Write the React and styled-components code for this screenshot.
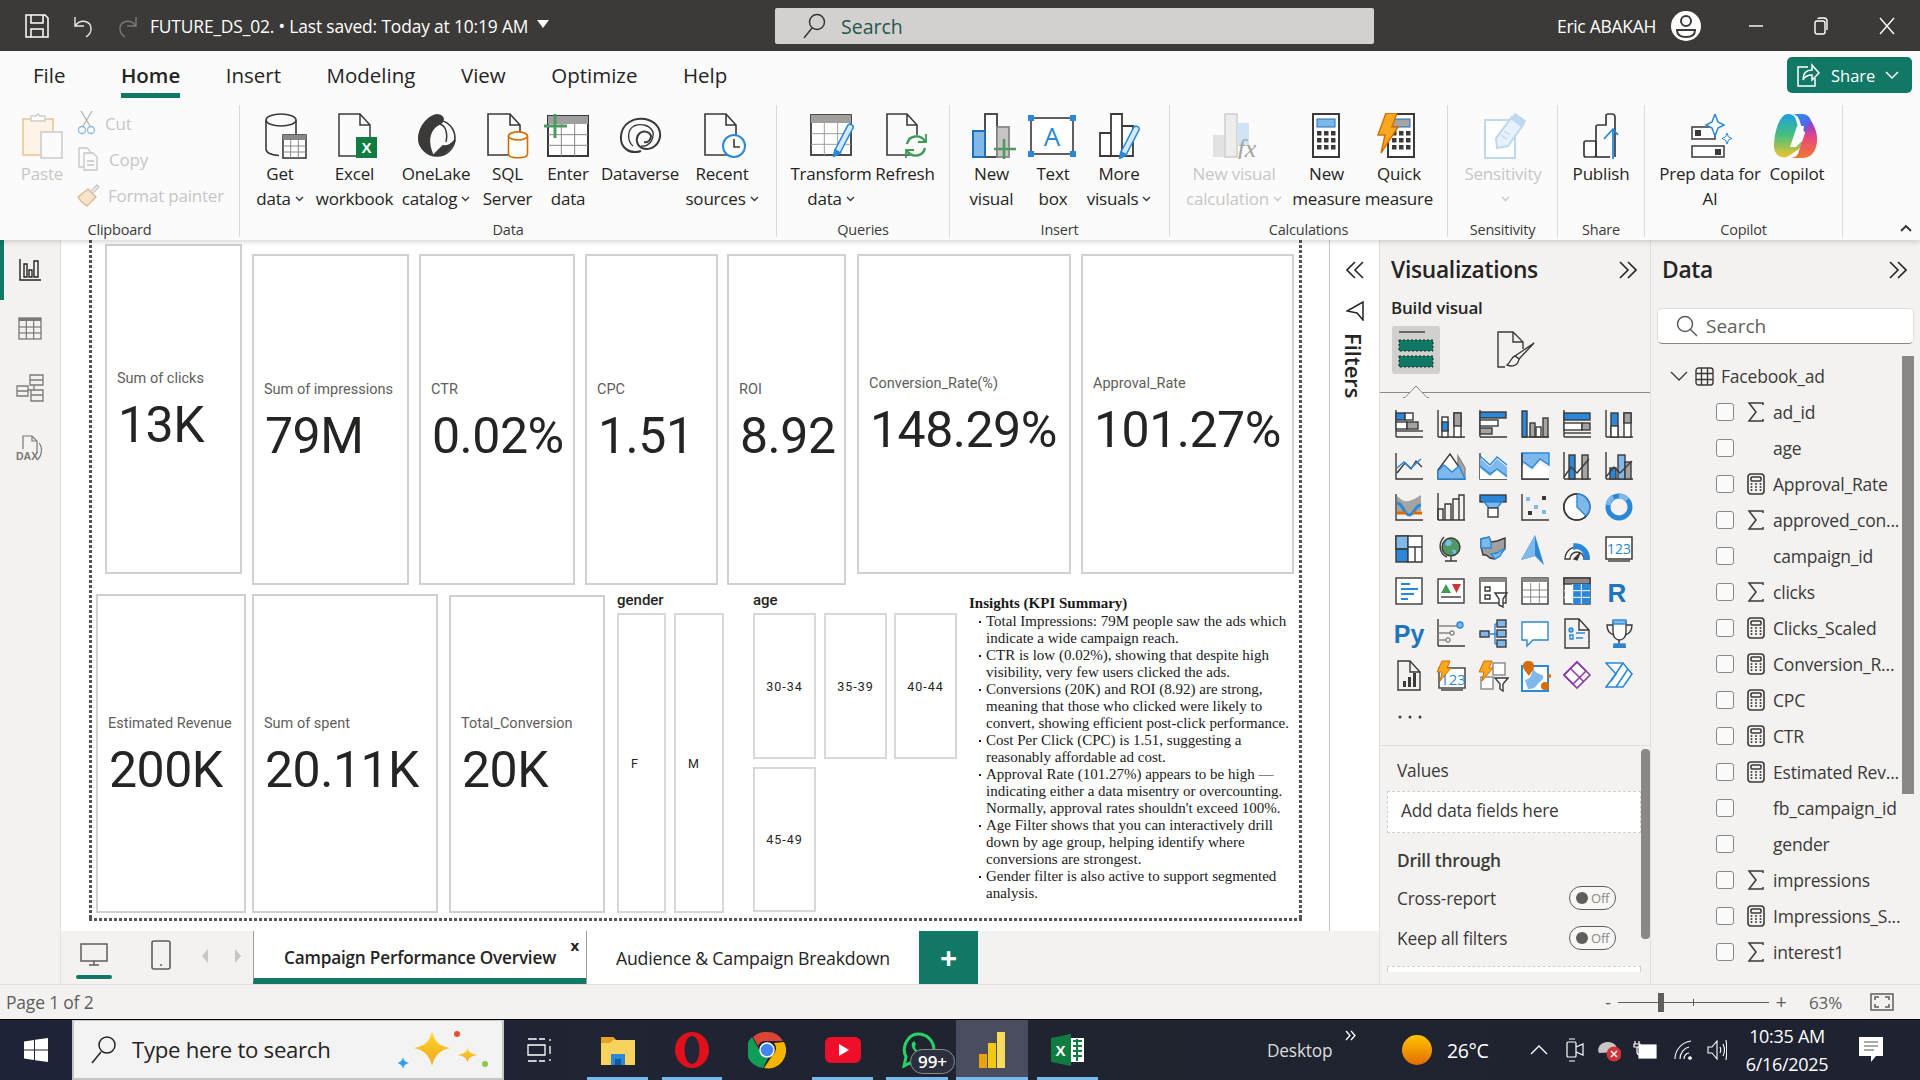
import React from "react"
import styled, { createGlobalStyle } from "styled-components"

const D = "#3b3a39"
const G = "#a6a4a2"
const B = "#2b88d8"
const L = "#7fb9ec"
const GREEN = "#117865"
const UI = `"Open Sans", "Noto Sans", sans-serif`

const Svg = ({ w, h, sw = 1.5, stroke = D, children }) => (
  <svg width={w} height={h} viewBox={`0 0 ${w} ${h}`} fill="none" stroke={stroke} strokeWidth={sw}>
    {children}
  </svg>
)

const Chev = ({ c = "#3b3a39" }) => (
  <svg width="9" height="6" viewBox="0 0 9 6" fill="none" stroke={c} strokeWidth="1.4" style={{ marginLeft: 4 }}>
    <path d="M1 1l3.5 3.5L8 1" />
  </svg>
)

const Doc = ({ x = 1, y = 1, w = 28, h = 42, c = D }) => (
  <path d={`M${x} ${y}H${x + w - 10}L${x + w} ${y + 11}V${y + h}H${x}ZM${x + w - 10} ${y}V${y + 11}H${x + w}`} stroke={c} />
)

const gridLines = (x, y, w, h, cols, rows, c = D, sw = 1) => {
  const out = []
  for (let i = 1; i < cols; i++) out.push(<path key={"c" + i} d={`M${x + (w / cols) * i} ${y}V${y + h}`} stroke={c} strokeWidth={sw} />)
  for (let i = 1; i < rows; i++) out.push(<path key={"r" + i} d={`M${x} ${y + (h / rows) * i}H${x + w}`} stroke={c} strokeWidth={sw} />)
  return out
}

const Calc = ({ x = 1, y = 1, screen = G }) => (
  <g>
    <rect x={x} y={y} width="26" height="43" fill="#fff" strokeWidth="2" />
    <rect x={x + 4} y={y + 5} width="18" height="8" fill={screen} stroke="#1e6fb8" strokeWidth="1" />
    {[17, 24, 31].map(r => [4, 11, 18].map(c => <rect key={r + "-" + c} x={x + c} y={y + r} width="4.5" height="4.5" fill={D} stroke="none" />))}
  </g>
)

const Pencil = ({ x, y }) => (
  <g transform={`translate(${x} ${y})`}>
    <path d="M3 27L16 2c2-2 6 0 5 3L8 30l-6 3z" fill="#d6e9f8" stroke={B} strokeWidth="1.6" />
    <path d="M2 33l1-6 5 3z" fill={B} stroke={B} />
  </g>
)

const icons = {
  paste: (
    <Svg w={42} h={46} stroke="#f0cfa6">
      <path d="M2 6h30v36H2z" fill="#fdf3e6" strokeWidth="2" />
      <path d="M10 8V3h5l2-2 2 2h5v5z" fill="#fff" stroke="#cfcdcb" />
      <rect x="20" y="19" width="21" height="26" fill="#fbfbfb" stroke="#cfcdcb" strokeWidth="1.6" />
    </Svg>
  ),
  getData: (
    <Svg w={42} h={46} sw={1.6}>
      <ellipse cx="16" cy="7" rx="15" ry="6" />
      <path d="M1 7v29c0 4 7 6 13 6.500M31 7v14" />
      <rect x="18" y="22" width="23" height="23" fill="#fff" />
      <rect x="18" y="22" width="23" height="5" fill="#8a8886" stroke="none" />
      {gridLines(18, 27, 23, 18, 3, 3, "#8a8886")}
    </Svg>
  ),
  excel: (
    <Svg w={42} h={46} sw={1.5} stroke="#8a8886">
      <Doc x={2} y={1} w={31} h={42} />
      <rect x="19" y="24" width="21" height="21" fill="#107c41" stroke="none" />
      <text x="29.500" y="40" fontSize="15" fontWeight="700" fontFamily="Liberation Sans" fill="#fff" stroke="none" textAnchor="middle">X</text>
    </Svg>
  ),
  onelake: (
    <Svg w={42} h={44} sw={2}>
      <circle cx="21" cy="24" r="18" strokeWidth="1.6" />
      <path d="M3 24C4 10 14 2 21 1c7 1 8 6 2 9C14 14 10 26 16 40 8 38 3 32 3 24z" fill={D} />
      <path d="M24 10c6 2 8 10 6 18" strokeWidth="1.4" />
      <path d="M18 41c8 1 15-3 21-15-3 5-8 7-12 6-3 3-6 6-9 9z" fill={D} />
    </Svg>
  ),
  sql: (
    <Svg w={44} h={46} sw={1.6}>
      <Doc x={1} y={1} w={32} h={41} />
      <ellipse cx="31" cy="23" rx="9.500" ry="4" fill="#fff" stroke="#d86c00" />
      <path d="M21.500 23v18c0 5 19 5 19 0V23" fill="#fff" stroke="#d86c00" />
      <ellipse cx="31" cy="23" rx="9.500" ry="4" fill="#fff" stroke="#d86c00" />
    </Svg>
  ),
  enter: (
    <Svg w={46} h={44}>
      <rect x="4" y="2" width="40" height="40" fill="#fff" strokeWidth="2" />
      <rect x="4" y="2" width="40" height="8" fill="#a19f9d" stroke="none" />
      {gridLines(4, 10, 40, 32, 3, 3, "#8a8886")}
      <path d="M11 0v24M0 12h23" stroke="#4e9a62" strokeWidth="3" />
    </Svg>
  ),
  dataverse: (
    <Svg w={44} h={38} sw={2}>
      <path d="M22 34C10 38 1 30 2 19 3 7 14 0 26 2c10 2 16 9 15 18-2 10-11 14-18 11-6-3-7-11-2-15 4-3 10-1 11 3 0 4-3 7-7 6" />
      <path d="M14 29C8 24 8 13 15 9c7-3 16-1 19 6 1 9-5 15-12 14" strokeWidth="1.4" />
    </Svg>
  ),
  recent: (
    <Svg w={42} h={46} sw={1.6}>
      <Doc x={1} y={1} w={31} h={41} />
      <circle cx="30" cy="33" r="11" fill="#fff" stroke={B} strokeWidth="2" />
      <path d="M30 26v8h6" />
    </Svg>
  ),
  transform: (
    <Svg w={46} h={46} sw={1.8}>
      <rect x="1" y="2" width="40" height="40" fill="#fff" />
      <rect x="1" y="2" width="40" height="8" fill="#a19f9d" stroke="none" />
      {gridLines(1, 10, 40, 32, 3, 3, "#a19f9d")}
      <Pencil x={22} y={10} />
    </Svg>
  ),
  refresh: (
    <Svg w={44} h={46} sw={1.6}>
      <Doc x={1} y={1} w={30} h={41} />
      <circle cx="30" cy="33" r="11" fill="#fbfbfb" stroke="none" />
      <path d="M21 31c2-9 13-10 18-3M39 35c-2 9-13 10-18 3" stroke="#3f9a57" strokeWidth="2.4" />
      <path d="M40 21v8h-8M20 45v-8h8" stroke="#3f9a57" strokeWidth="1.8" />
    </Svg>
  ),
  newVisual: (
    <Svg w={46} h={46} sw={1.8}>
      <rect x="13" y="1" width="12" height="43" fill="#fff" />
      <rect x="25" y="14" width="12" height="30" fill="#c8c6c4" stroke="#8a8886" />
      <rect x="1" y="18" width="12" height="26" fill="#7fb9ec" stroke="#1e6fb8" strokeWidth="2" />
      <path d="M32 26v20M22 36h22" stroke="#4e9a62" strokeWidth="2.6" />
    </Svg>
  ),
  textBox: (
    <Svg w={48} h={46} sw={1.6}>
      <rect x="3" y="5" width="42" height="36" fill="#fff" />
      {[[3, 5], [45, 5], [3, 41], [45, 41]].map(p => (
        <rect key={p.join()} x={p[0] - 3} y={p[1] - 3} width="6" height="6" fill={B} stroke="none" />
      ))}
      <text x="24" y="33" fontSize="26" fontFamily="Open Sans" fill={B} stroke="none" textAnchor="middle">A</text>
    </Svg>
  ),
  more: (
    <Svg w={46} h={46} sw={1.8}>
      <path d="M1 20h11v23H1zM12 1h11v42H12zM23 13h11v30H23z" fill="#fff" />
      <Pencil x={19} y={12} />
    </Svg>
  ),
  calcVisual: (
    <Svg w={46} h={46} sw={1.6} stroke="#d2d0ce">
      <rect x="0" y="22" width="12" height="22" fill="#e4e2e0" stroke="none" />
      <rect x="12" y="1" width="12" height="43" fill="#ededed" />
      <rect x="24" y="10" width="12" height="22" fill="#cfe4f6" stroke="none" />
      <text x="34" y="44" fontSize="26" fontStyle="italic" fontFamily="Liberation Serif" fill="#a6a4a2" stroke="none" textAnchor="middle">fx</text>
    </Svg>
  ),
  measure: (
    <Svg w={30} h={46}><Calc x={2} y={1} screen={L} /></Svg>
  ),
  quick: (
    <Svg w={42} h={46}>
      <g transform="translate(13 1)"><Calc x={0} y={0} screen={G} /></g>
      <path d="M11 0h11l-5 14h6L6 40l4-18H3z" fill="#f6a821" stroke="#d86c00" strokeWidth="1.4" />
    </Svg>
  ),
  sensitivity: (
    <Svg w={44} h={46} stroke="#bcd9f0" sw={2}>
      <rect x="1" y="7" width="30" height="38" fill="#fff" />
      <path d="M12 25L28 4l11 8-15 21-11 2z" fill="#e6f1fa" />
      <path d="M31 1l10 7-3 5-10-7z" fill="#bcd9f0" />
      <path d="M17 22l6 4M20 18l6 4" strokeWidth="1.4" />
    </Svg>
  ),
  publish: (
    <Svg w={36} h={46} sw={1.7}>
      <rect x="1" y="28" width="12" height="16" rx="2" fill="#fff" />
      <path d="M13 44V14c0-2 1-2 2-2h8V3c0-1 1-2 2-2h4c2 0 3 1 3 3v40" />
      <path d="M13 44h14" />
      <path d="M30 46V17M21 26l9-10 5 6" stroke={B} strokeWidth="1.8" />
    </Svg>
  ),
  prep: (
    <Svg w={42} h={44} sw={1.5}>
      <rect x="1" y="13" width="23" height="12" fill="#fff" />
      <rect x="4" y="16" width="6" height="6" fill={D} stroke="none" />
      <rect x="1" y="32" width="32" height="11" fill="#fff" />
      <rect x="24" y="35" width="6" height="6" fill={D} stroke="none" />
      <path d="M24 0l3 8 6 3-6 3-3 8-3-8-6-3 6-3z" stroke={B} fill="#fff" />
      <path d="M36 19l1.500 4 3.500 1.500-3.500 1.500-1.500 4-1.500-4-3.500-1.500 3.500-1.500z" stroke={B} fill="#fff" strokeWidth="1" />
    </Svg>
  ),
  copilot: (
    <svg width="46" height="46" viewBox="0 0 46 46">
      <defs>
        <linearGradient id="cpa" x1="0" y1="0" x2="1" y2="1">
          <stop offset="0" stopColor="#1a9cf0" /><stop offset="1" stopColor="#7c3fe0" />
        </linearGradient>
        <linearGradient id="cpb" x1="0" y1="0" x2="0" y2="1">
          <stop offset="0" stopColor="#7c3fe0" /><stop offset=".45" stopColor="#e8487f" /><stop offset="1" stopColor="#f0782f" />
        </linearGradient>
        <linearGradient id="cpc" x1="0" y1="0" x2="0" y2="1">
          <stop offset="0" stopColor="#1c9fe0" /><stop offset=".5" stopColor="#49c07a" /><stop offset="1" stopColor="#f2c230" />
        </linearGradient>
      </defs>
      <path d="M15 1h14c5 0 8 3 9 7l4 14c-6 0-11-2-13-7l-3-9c-1-3-4-5-8-5z" fill="url(#cpa)" />
      <path d="M15 1c4 0 7 2 8 6l6 20c1 4-1 9-6 11l-9 6c-7 2-13-3-13-11C1 21 6 1 15 1z" fill="url(#cpc)" />
      <path d="M38 8c5 7 8 17 5 26-2 7-7 11-13 11H17c4 0 8-2 9-7l6-18c1-4 4-9 6-12z" fill="url(#cpb)" />
      <path d="M24 13h7l-2 15-6 6h-6z" fill="#fbfbfb" />
    </svg>
  ),
}

const axis = <path d="M1 1v26h27" />
const box = (x, y, w, h, f = "#fff") => <rect x={x} y={y} width={w} height={h} fill={f} />
const hBase = <path d="M1 0v27M1 27h27" />

const VizText = styled.text`
  font-family: "Liberation Sans", sans-serif;
  font-weight: 700;
`

const viz = [
  <>{hBase}{box(1, 3, 9, 7, B)}{box(10, 3, 8, 7)}{box(1, 12, 11, 7)}{box(12, 12, 11, 7, G)}<path d="M1 21h27" /></>,
  <>{hBase}{box(5, 7, 6, 20)}{box(5, 12, 6, 9, B)}{box(17, 3, 7, 24)}{box(17, 3, 7, 13, G)}</>,
  <>{hBase}{box(1, 2, 26, 6, B)}{box(1, 10, 18, 6)}{box(1, 18, 12, 6, G)}</>,
  <>{box(1, 1, 5, 26, B)}{box(9, 13, 5, 14, G)}{box(15, 17, 5, 10)}{box(22, 8, 5, 19, G)}<path d="M1 27h27" /></>,
  <>{hBase}{box(1, 3, 26, 7, B)}{box(1, 13, 18, 7)}{box(19, 13, 8, 7, G)}<path d="M1 23h27" /></>,
  <>{hBase}{box(6, 3, 7, 24, B)}{box(6, 16, 7, 11)}{box(19, 3, 7, 24)}{box(19, 3, 7, 10, G)}</>,

  <>{axis}<path d="M2 21l8-10 6 6 5-8 6 6" stroke={D} /><path d="M2 16l7-6 7 6 10-9" stroke={B} /></>,
  <>{box(1, 27, 27, 0)}<path d="M21 27V4l7 12v11z" fill={G} stroke="#8a8886" /><path d="M1 27V18L13 2l9 13 5 12z" fill="#fff" /><path d="M1 27v-8l6-6 8 7 7-6 6 13z" fill={L} stroke={B} /></>,
  <>{axis}<path d="M1 6l10 9 7-8 10 8v12H1z" fill={L} stroke="none" /><path d="M1 4l10 9 7-8 10 8M1 14l10 8 7-5 10 7" stroke={B} /><path d="M1 16l10 8 7-6 10 8v1H1z" fill="#fff" stroke="none" /></>,
  <>{axis}<path d="M1 1h27v12l-9-6-8 9-10-7z" fill={L} stroke={B} /><path d="M1 13l10 7 8-9 9 6v10H1z" fill="#fff" stroke="none" />{axis}</>,
  <>{hBase}{box(6, 3, 6, 24, B)}{box(19, 3, 6, 24, G)}<path d="M1 25l7-10 6 6 12-14" /></>,
  <>{hBase}{box(5, 16, 6, 11, B)}{box(13, 3, 7, 24, L)}{box(20, 10, 6, 17, G)}<path d="M1 25l8-10 6 6 12-12" /></>,

  <>{axis}<path d="M2 3c6 5 8 6 12 5s7-3 12-6v16c-6 0-9 3-12 3S7 19 2 19z" fill={G} stroke="none" /><path d="M2 10c6 0 7 12 12 12s6-10 12-10" stroke={B} strokeWidth="3" /><path d="M2 20h9M18 20h9" stroke="#d86c00" strokeWidth="3" /></>,
  <>{hBase}<path d="M1 27V16h5v11M8 27V11h6v16M16 27V6h6v21M22 27V2h5v25" /></>,
  <>{box(1, 2, 26, 7, B)}<path d="M5 9h18l-5 6H10z" fill={L} stroke={B} />{box(9, 15, 10, 9, "#fff")}</>,
  <>{axis}<rect x="5" y="4" width="4" height="4" fill={L} stroke="none" /><rect x="13" y="12" width="4" height="4" fill={L} stroke="none" /><rect x="21" y="3" width="4" height="4" fill={D} stroke="none" /><rect x="7" y="18" width="4" height="4" fill={D} stroke="none" /><rect x="21" y="17" width="4" height="4" fill={L} stroke="none" /></>,
  <><circle cx="14" cy="14" r="13" fill="#fff" /><path d="M14 1a13 13 0 0 1 9 22l-9-9z" fill={L} stroke={B} /><path d="M14 1a13 13 0 1 0 9 22" /></>,
  <><circle cx="14" cy="14" r="11" stroke={B} strokeWidth="5" /><path d="M14 3a11 11 0 0 1 8 4" stroke={L} strokeWidth="5" /><path d="M3 12a11 11 0 0 1 5-8" stroke={L} strokeWidth="5" /></>,

  <>{box(1, 1, 12, 26, B)}{box(1, 1, 12, 13, L)}<path d="M13 1h14v26H13z" fill="#fff" /><path d="M13 12h14M20 12v15" /><path d="M1 14h12" /></>,
  <><circle cx="14" cy="12" r="9" fill="#4e9a62" stroke={D} /><path d="M10 5c4 0 6 2 4 5-3 2-5 1-6-1zM15 15c3-1 5 0 4 3-2 2-3 1-4-3z" fill={L} stroke="none" /><path d="M7 2C1 8 2 19 10 22M8 26h12M14 22v4" /></>,
  <><path d="M2 4l8-2 2 5 6-1 8-3v11l-5 5-4-1-2 6-4-1-4-3H4L2 12z" fill="#a19f9d" stroke={D} /><path d="M2 4l8-2 2 5v6H2z" fill={L} stroke={B} /><path d="M12 19l6-1 8-5-5 8-5 3z" fill={L} stroke={B} /></>,
  <><path d="M14 0l9 30-9-9-14 4z" fill={B} stroke="none" /><path d="M14 0v21L0 25z" fill={L} stroke="none" /></>,
  <><path d="M2 24a12 12 0 0 1 24 0h-5a7 7 0 0 0-14 0z" fill="#fff" /><path d="M11 9a14 14 0 0 1 15 15h-5a8 8 0 0 0-10-10z" fill={B} stroke={B} /><path d="M11 24l6-6-3 7z" fill={D} /></>,
  <><rect x="1" y="2" width="26" height="22" fill="#fff" strokeWidth="1.500" /><path d="M3 26h22" /><text x="14" y="19" fontSize="14" fontFamily="Open Sans" fill={B} stroke="none" textAnchor="middle">123</text></>,

  <><rect x="1" y="1" width="26" height="26" fill="#fff" /><path d="M6 7h9M6 12h17M6 17h13M6 22h7" stroke={B} strokeWidth="2" /></>,
  <><rect x="1" y="2" width="26" height="24" fill="#fff" /><path d="M9 7l5 9H4z" fill="#3f9a57" stroke="none" /><path d="M15 7h9l-4.500 9z" fill="#d13438" stroke="none" /><path d="M4 20h20" /></>,
  <><rect x="1" y="1" width="26" height="25" fill="#fff" /><path d="M1 3h26" strokeWidth="4" stroke="#8a8886" /><path d="M6 10h5v4H6zM6 18h5v4H6z" /><path d="M16 16h12l-4 6v8l-4-2v-6z" fill="#fff" /></>,
  <><rect x="1" y="1" width="26" height="26" fill="#fff" /><path d="M1 3h26" strokeWidth="4" stroke="#8a8886" />{gridLines(1, 6, 26, 21, 3, 3, "#8a8886")}</>,
  <><rect x="1" y="1" width="26" height="26" fill="#fff" /><rect x="1" y="1" width="26" height="6" fill="#8a8886" stroke={D} /><rect x="10" y="7" width="17" height="20" fill={B} stroke="none" />{gridLines(1, 7, 26, 20, 3, 3, "#fff")}</>,
  <VizText x="12" y="25" fontSize="26" fill="#1e74bd" stroke="none" textAnchor="middle">R</VizText>,

  <VizText x="14" y="24" fontSize="25" fill="#1e74bd" stroke="none" textAnchor="middle">Py</VizText>,
  <>{hBase}<path d="M1 7h20M1 14h12M1 21h8" stroke="#8a8886" /><circle cx="23" cy="6" r="3" fill={L} stroke={B} /><circle cx="15" cy="14" r="2" fill="#fff" stroke="#8a8886" /><circle cx="11" cy="21" r="2" fill="#fff" stroke="#8a8886" /></>,
  <>{box(1, 12, 9, 6, L)}<path d="M10 15h6M16 5v20M16 5h3M16 15h3M16 25h3" stroke={B} />{box(18, 1, 9, 7, L)}{box(18, 11, 9, 7, L)}{box(18, 21, 9, 7, L)}</>,
  <path d="M1 3h26v18H12l-6 6v-6H1z" fill="#fff" stroke={B} />,
  <><Doc x={2} y={0} w={24} h={29} /><circle cx="8" cy="11" r="2" fill={L} stroke={B} /><path d="M7 16h3v4H7zM13 14h9M13 19h7" stroke={B} /></>,
  <><path d="M8 3h13v10c0 5-3 8-6.500 8S8 18 8 13z" fill="#fff" /><path d="M8 6H2c0 6 3 9 7 10M21 6h6c0 6-3 9-7 10M14 21v4M8 28h13" /><rect x="8" y="1" width="13" height="4" fill={L} stroke={B} /><rect x="9" y="25" width="11" height="3" fill={B} stroke={B} /></>,

  <><Doc x={3} y={0} w={22} h={29} /><rect x="8" y="20" width="3" height="6" fill={D} stroke="none" /><rect x="13" y="16" width="3" height="10" fill={D} stroke="none" /><rect x="18" y="12" width="3" height="14" fill={D} stroke="none" /></>,
  <><rect x="2" y="7" width="26" height="20" fill="#fff" /><path d="M4 29h22" /><text x="16" y="24" fontSize="15" fontFamily="Open Sans" fill={B} stroke="none" textAnchor="middle">123</text><path d="M5 0h8l-3 7h4L3 20l2-9H0z" fill="#f6a821" stroke="#d86c00" strokeWidth="1" /></>,
  <><rect x="14" y="2" width="12" height="12" fill="#fff" stroke="#8a8886" /><rect x="2" y="16" width="12" height="12" fill="#fff" stroke="#8a8886" /><path d="M16 17h13l-5 6v7l-3-2v-5z" fill="#fff" /><path d="M5 0h8l-3 7h4L3 20l2-9H0z" fill="#f6a821" stroke="#d86c00" strokeWidth="1" /></>,
  <><path d="M1 5h26v25H1z" fill="#fff" stroke={B} strokeWidth="2" /><path d="M12 6c2 8 8 6 10 9 2 3-4 6-6 9s-4 4-9 4L4 19c5-1 7-4 8-13z" fill={L} stroke="none" /><path d="M7 0c4 0 6 2 6 5 0 4-4 8-5 10C6 12 2 9 2 5c0-3 2-5 5-5z" fill="#d86c00" stroke="none" /><circle cx="24" cy="25" r="4" fill="#d86c00" stroke="none" /><circle cx="28" cy="15" r="2" fill="#d86c00" stroke="none" /></>,
  <g stroke="#8e3ea6" strokeWidth="1.6"><path d="M14 1l13 13-13 13L1 14z" fill="#fff" /><path d="M8 8l13 13M14 1L1 14l9 9 13-13z" /></g>,
  <g stroke={B} strokeWidth="1.6"><path d="M1 2h17l9 11-9 13H1l10-13z" fill="#fff" /><path d="M18 2L6 20M23 8L11 26" /></g>,
]

const RibbonButton = ({ w, icon, lines, caret, off, dx = 0 }) => (
  <RBtn $w={w} $off={off}>
    <RIcon $dx={dx}>{icon}</RIcon>
    {lines.map((l, i) => (
      <RLine key={i}>
        {l}
        {caret && i === lines.length - 1 && <Chev c={off ? "#c8c6c4" : D} />}
      </RLine>
    ))}
  </RBtn>
)

const fields = [
  ["ad_id", "s"], ["age", ""], ["Approval_Rate", "c"], ["approved_con...", "s"], ["campaign_id", ""], ["clicks", "s"],
  ["Clicks_Scaled", "c"], ["Conversion_R...", "c"], ["CPC", "c"], ["CTR", "c"], ["Estimated Rev...", "c"], ["fb_campaign_id", ""],
  ["gender", ""], ["impressions", "s"], ["Impressions_S...", "c"], ["interest1", "s"],
]

const cards = [
  { x: 105, y: 244, w: 137, h: 330, label: "Sum of clicks", value: "13K" },
  { x: 252, y: 254, w: 157, h: 331, label: "Sum of impressions", value: "79M" },
  { x: 419, y: 254, w: 156, h: 331, label: "CTR", value: "0.02%" },
  { x: 585, y: 254, w: 133, h: 331, label: "CPC", value: "1.51" },
  { x: 727, y: 254, w: 119, h: 331, label: "ROI", value: "8.92" },
  { x: 857, y: 254, w: 214, h: 320, label: "Conversion_Rate(%)", value: "148.29%" },
  { x: 1081, y: 254, w: 213, h: 320, label: "Approval_Rate", value: "101.27%" },
  { x: 96, y: 594, w: 150, h: 319, label: "Estimated Revenue", value: "200K" },
  { x: 252, y: 594, w: 186, h: 319, label: "Sum of spent", value: "20.11K" },
  { x: 449, y: 595, w: 156, h: 318, label: "Total_Conversion", value: "20K" },
]

const tiles = [
  { x: 617, y: 613, w: 49, h: 300, t: "F", left: true },
  { x: 674, y: 613, w: 50, h: 300, t: "M", left: true },
  { x: 753, y: 613, w: 63, h: 146, t: "30-34" },
  { x: 824, y: 613, w: 63, h: 146, t: "35-39" },
  { x: 894, y: 613, w: 63, h: 146, t: "40-44" },
  { x: 753, y: 767, w: 63, h: 145, t: "45-49" },
]

const insights = [
  ["Total Impressions: 79M people saw the ads which", "indicate a wide campaign reach."],
  ["CTR is low (0.02%), showing that despite high", "visibility, very few users clicked the ads."],
  ["Conversions (20K) and ROI (8.92) are strong,", "meaning that those who clicked were likely to", "convert, showing efficient post-click performance."],
  ["Cost Per Click (CPC) is 1.51, suggesting a", "reasonably affordable ad cost."],
  ["Approval Rate (101.27%) appears to be high —", "indicating either a data misentry or overcounting.", "Normally, approval rates shouldn't exceed 100%."],
  ["Age Filter shows that you can interactively drill", "down by age group, helping identify where", "conversions are strongest."],
  ["Gender filter is also active to support segmented", "analysis."],
]

const Toggle = () => (
  <ToggleWrap>
    <Knob />
    Off
  </ToggleWrap>
)

const Sigma = () => (
  <Svg w={18} h={20} sw={1.5}><path d="M16 3V1H2l7 9-7 9h14v-2" /></Svg>
)

const CalcMini = () => (
  <Svg w={18} h={22} sw={1.6}>
    <rect x="1" y="1" width="16" height="20" rx="3" />
    <rect x="4" y="4" width="10" height="4" rx="1" />
    {[11, 14, 17].map(r => [4.5, 9, 13.5].map(c => <circle key={r + "-" + c} cx={c} cy={r} r="1" fill={D} stroke="none" />))}
  </Svg>
)

export default function App() {
  return (
    <Shell>
      <GlobalStyle />
      <TitleBar>
        <TitleIcons>
          <Svg w={24} h={24} stroke="#fff" sw={1.5}>
            <path d="M1 1h19l3 3v19H1z" /><path d="M6 1v8h12V1M6 23v-8h12v8" />
          </Svg>
          <Svg w={22} h={24} stroke="#e6e6e6" sw={1.4}>
            <path d="M3 3v9h9M3 12c6-8 16-5 16 3 0 3-2 6-5 8" />
          </Svg>
          <Svg w={22} h={24} stroke="#7a7978" sw={1.4}>
            <path d="M19 3v9h-9M19 12C13 4 3 7 3 15c0 3 2 6 5 8" />
          </Svg>
        </TitleIcons>
        <FileName>FUTURE_DS_02. • Last saved: Today at 10:19 AM</FileName>
        <Caret />
        <TitleSearch>
          <Svg w={24} h={26} stroke="#323130" sw={1.4}>
            <circle cx="15" cy="9" r="7.500" /><path d="M10 15L2 25" />
          </Svg>
          <span>Search</span>
        </TitleSearch>
        <UserName>Eric ABAKAH</UserName>
        <Avatar>
          <Svg w={30} h={30} stroke="#3b3a39" sw={2}>
            <circle cx="15" cy="10" r="5" /><path d="M6 19h18c0 5-4 7-9 7s-9-2-9-7z" />
          </Svg>
        </Avatar>
        <WinControls>
          <Svg w={14} h={14} stroke="#fff" sw={1.4}><path d="M0 7h14" /></Svg>
          <Svg w={14} h={18} stroke="#fff" sw={1.4}><rect x="1" y="4" width="10" height="13" rx="2" /><path d="M4 2c0-1 1-1 2-1h4c2 0 3 1 3 3v9" /></Svg>
          <Svg w={16} h={18} stroke="#fff" sw={1.4}><path d="M1 1l14 16M15 1L1 17" /></Svg>
        </WinControls>
      </TitleBar>

      <Ribbon>
        <TabRow>
          <RTab $first>File</RTab>
          <RTab $on>Home</RTab>
          <RTab>Insert</RTab>
          <RTab>Modeling</RTab>
          <RTab>View</RTab>
          <RTab>Optimize</RTab>
          <RTab>Help</RTab>
          <ShareBtn>
            <Svg w={24} h={26} stroke="#fff" sw={1.5}>
              <path d="M12 5H2v19h17v-8" /><path d="M7 18c0-7 4-10 9-10V3l7 8-7 7v-5c-4 0-7 1-9 5z" />
            </Svg>
            <span>Share</span>
            <Svg w={14} h={9} stroke="#fff" sw={1.5}><path d="M1 1l6 6 6-6" /></Svg>
          </ShareBtn>
        </TabRow>
        <Groups>
          <Group $w={240} label="Clipboard" $pad={20}>
            <RibbonButton w={44} icon={icons.paste} lines={["Paste"]} off />
            <SmallStack>
              <SmallBtn>
                <Svg w={20} h={26} stroke="#b5b3b1" sw={1.3}>
                  <path d="M4 1l9 15M15 1L6 16" /><circle cx="5" cy="20" r="3.500" stroke="#8bb9df" /><circle cx="14" cy="20" r="3.500" stroke="#8bb9df" />
                </Svg>
                Cut
              </SmallBtn>
              <SmallBtn>
                <Svg w={24} h={24} stroke="#c8c6c4" sw={1.3}>
                  <path d="M2 1h8l3 3v16H2z" /><path d="M7 6h9l4 4v13H7z" fill="#fbfbfb" /><path d="M10 14h7M10 18h7" />
                </Svg>
                Copy
              </SmallBtn>
              <SmallBtn $pull>
                <Svg w={24} h={24} stroke="#d8b58a" sw={1.3}>
                  <path d="M2 14L12 6l8 8-9 9c-3-2-7-5-9-9z" fill="#f7e3cb" /><path d="M15 8l6-6 2 2-6 6" stroke="#c8c6c4" fill="#efefef" />
                </Svg>
                Format painter
              </SmallBtn>
            </SmallStack>
          </Group>
          <Group $w={537} label="Data" $pad={5}>
            <RibbonButton w={70} dx={6} icon={icons.getData} lines={["Get", "data"]} caret />
            <RibbonButton w={79} dx={3} icon={icons.excel} lines={["Excel", "workbook"]} />
            <RibbonButton w={84} dx={1} icon={icons.onelake} lines={["OneLake", "catalog"]} caret />
            <RibbonButton w={59} dx={1} icon={icons.sql} lines={["SQL", "Server"]} />
            <RibbonButton w={62} dx={-1} icon={icons.enter} lines={["Enter", "data"]} />
            <RibbonButton w={82} dx={1} icon={icons.dataverse} lines={["Dataverse"]} />
            <RibbonButton w={82} dx={3} icon={icons.recent} lines={["Recent", "sources"]} caret />
          </Group>
          <Group $w={173} label="Queries" $pad={4}>
            <RibbonButton w={100} dx={2} icon={icons.transform} lines={["Transform", "data"]} caret />
            <RibbonButton w={48} dx={3} icon={icons.refresh} lines={["Refresh"]} />
          </Group>
          <Group $w={220} label="Insert" $pad={10}>
            <RibbonButton w={63} dx={3} icon={icons.newVisual} lines={["New", "visual"]} />
            <RibbonButton w={60} dx={-1} icon={icons.textBox} lines={["Text", "box"]} />
            <RibbonButton w={72} dx={3} icon={icons.more} lines={["More", "visuals"]} caret />
          </Group>
          <Group $w={278} label="Calculations" $pad={9}>
            <RibbonButton w={110} dx={2} icon={icons.calcVisual} lines={["New visual", "calculation"]} caret off />
            <RibbonButton w={75} dx={-1} icon={icons.measure} lines={["New", "measure"]} />
            <RibbonButton w={70} dx={-3} icon={icons.quick} lines={["Quick", "measure"]} />
          </Group>
          <Group $w={110} label="Sensitivity" $pad={11}>
            <RibbonButton w={88} dx={3} icon={icons.sensitivity} lines={["Sensitivity", ""]} caret off />
          </Group>
          <Group $w={87} label="Share" $pad={13}>
            <RibbonButton w={60} icon={icons.publish} lines={["Publish"]} />
          </Group>
          <Group $w={198} label="Copilot" $pad={11}>
            <RibbonButton w={108} dx={2} icon={icons.prep} lines={["Prep data for", "AI"]} />
            <RibbonButton w={66} dx={-1} icon={icons.copilot} lines={["Copilot"]} />
          </Group>
          <Collapse>
            <Svg w={12} h={8} sw={1.8} stroke="#323130"><path d="M1 7l5-5 5 5" /></Svg>
          </Collapse>
        </Groups>
      </Ribbon>

      <Main>
        <Rail>
          <RailItem $on>
            <Svg w={22} h={22} sw={1.4} stroke="#252423">
              <path d="M1 0v21h21" /><path d="M5 5h3v13H5zM10 11h3v7h-3zM15 2h4v16h-4z" />
            </Svg>
          </RailItem>
          <RailItem>
            <Svg w={24} h={23} sw={1.3} stroke="#7a7978">
              <rect x="1" y="1" width="22" height="21" />
              <path d="M1 2.500h22" strokeWidth="3" />
              {gridLines(1, 4, 22, 18, 3, 3, "#7a7978", 1.2)}
            </Svg>
          </RailItem>
          <RailItem>
            <Svg w={28} h={28} sw={1.3} stroke="#7a7978">
              <path d="M1 12h11v10H1zM1 17h11" /><path d="M14 1h13v10H14zM14 6h13M15 16h12v11H15zM15 21h12" />
              <path d="M12 16h3M18 11v5" />
            </Svg>
          </RailItem>
          <RailItem>
            <Svg w={28} h={26} sw={1.2} stroke="#7a7978">
              <path d="M7 14V1h9l5 5v12" /><path d="M16 1v5h5M23 8c4 5 3 13-2 17" />
              <text x="0" y="25" fontSize="10.500" fontWeight="700" fontFamily="Liberation Sans" fill="#7a7978" stroke="none">DAX</text>
            </Svg>
          </RailItem>
        </Rail>

        <Center>
          <CanvasRow>
            <Canvas>
              <Page>
                {cards.map(c => (
                  <Card key={c.label} $x={c.x} $y={c.y} $w={c.w} $h={c.h}>
                    <CardLabel>{c.label}</CardLabel>
                    <CardValue>{c.value}</CardValue>
                  </Card>
                ))}
                <SlicerTitle $x={617}>gender</SlicerTitle>
                <SlicerTitle $x={753}>age</SlicerTitle>
                {tiles.map(t => (
                  <Tile key={t.t} $x={t.x} $y={t.y} $w={t.w} $h={t.h} $left={t.left}>{t.t}</Tile>
                ))}
                <Insights>
                  <InsightsTitle>Insights (KPI Summary)</InsightsTitle>
                  {insights.map(lines => (
                    <Bullet key={lines[0]}>
                      {lines.map(l => <span key={l}>{l}</span>)}
                    </Bullet>
                  ))}
                </Insights>
              </Page>
            </Canvas>
            <Filters>
              <Svg w={18} h={18} sw={1.6} stroke="#252423"><path d="M9 1L1 9l8 8M17 1L9 9l8 8" /></Svg>
              <FilterGlyph>
                <Svg w={18} h={20} sw={1.5} stroke="#252423"><path d="M17 1v18l-6-7-10-2z" /></Svg>
              </FilterGlyph>
              <FiltersText>Filters</FiltersText>
            </Filters>
          </CanvasRow>
          <TabBar>
            <ViewIcons>
              <ViewBtn $on>
                <Svg w={28} h={24} sw={1.5} stroke="#605e5c">
                  <rect x="1" y="1" width="26" height="17" /><path d="M14 18v4M9 22h10" />
                </Svg>
              </ViewBtn>
              <ViewBtn>
                <Svg w={20} h={30} sw={1.6} stroke="#605e5c">
                  <rect x="1" y="1" width="18" height="28" rx="2" /><path d="M9 25h2" />
                </Svg>
              </ViewBtn>
              <ArrowBtn $gap={18}>
                <Svg w={8} h={14} sw={0} stroke="none"><path d="M7 0v14L1 7z" fill="#c8c6c4" /></Svg>
              </ArrowBtn>
              <ArrowBtn $gap={17}>
                <Svg w={8} h={14} sw={0} stroke="none"><path d="M1 0v14l6-7z" fill="#c8c6c4" /></Svg>
              </ArrowBtn>
            </ViewIcons>
            <PageTab $on>
              Campaign Performance Overview
              <TabClose>x</TabClose>
            </PageTab>
            <PageTab>Audience &amp; Campaign Breakdown</PageTab>
            <AddPage>+</AddPage>
          </TabBar>
        </Center>

        <VizPane>
          <PaneHeader>
            <PaneTitle>Visualizations</PaneTitle>
            <Svg w={18} h={18} sw={1.6} stroke="#252423"><path d="M1 1l8 8-8 8M9 1l8 8-8 8" /></Svg>
          </PaneHeader>
          <BuildLabel>Build visual</BuildLabel>
          <BuildTabs>
            <BuildBtn>
              <Svg w={36} h={38} sw={1}>
                <path d="M1 1h26" stroke="#3b3a39" strokeWidth="1.4" />
                <rect x="1" y="9" width="34" height="11" fill={GREEN} stroke="#252423" strokeDasharray="2 2" />
                <rect x="1" y="25" width="34" height="11" fill={GREEN} stroke="#252423" strokeDasharray="2 2" />
              </Svg>
            </BuildBtn>
            <FormatBtn>
              <Svg w={38} h={38} sw={1.4}>
                <path d="M8 36H1V1h15l10 10v7" /><path d="M16 1v10h10" />
                <path d="M37 12L22 28l-4-3z" fill="#f3f2f1" /><path d="M18 25c-4 1-4 6-8 9 5 2 11 1 12-6z" fill="#f3f2f1" />
              </Svg>
            </FormatBtn>
            <Notch>
              <svg width="26" height="13" viewBox="0 0 26 13" fill="#f3f2f1" stroke="#8a8886"><path d="M0 12.500h2L13 1l11 11.500h2" /></svg>
            </Notch>
          </BuildTabs>
          <VizGrid>
            {viz.map((v, i) => (
              <VizCell key={i}>
                <svg width="30" height="32" viewBox="0 -1 30 32" fill="none" stroke={D} strokeWidth="1.400">{v}</svg>
              </VizCell>
            ))}
            <VizCell $more>
              <Svg w={24} h={4} stroke="none" sw={0}>
                <circle cx="2" cy="2" r="1.500" fill={D} /><circle cx="12" cy="2" r="1.500" fill={D} /><circle cx="22" cy="2" r="1.500" fill={D} />
              </Svg>
            </VizCell>
          </VizGrid>
          <Wells>
            <WellLabel>Values</WellLabel>
            <WellBox>Add data fields here</WellBox>
            <DrillTitle>Drill through</DrillTitle>
            <ToggleRow>Cross-report<Toggle /></ToggleRow>
            <ToggleRow $gap>Keep all filters<Toggle /></ToggleRow>
            <WellStub />
            <WellThumb />
          </Wells>
        </VizPane>

        <DataPane>
          <PaneHeader>
            <PaneTitle>Data</PaneTitle>
            <Svg w={18} h={18} sw={1.6} stroke="#252423"><path d="M1 1l8 8-8 8M9 1l8 8-8 8" /></Svg>
          </PaneHeader>
          <DataSearch>
            <Svg w={22} h={22} stroke="#605e5c" sw={1.500}><circle cx="9" cy="9" r="7.500" /><path d="M14 14l7 7" /></Svg>
            <span>Search</span>
          </DataSearch>
          <TableRow>
            <Svg w={18} h={10} stroke="#3b3a39" sw={1.300}><path d="M1 1l8 8 8-8" /></Svg>
            <Svg w={19} h={19} stroke="#3b3a39" sw={1.400}>
              <rect x="1" y="1" width="17" height="17" rx="2.500" /><path d="M6.500 1v17M12.500 1v17M1 6.500h17M1 12.500h17" />
            </Svg>
            <TableName>Facebook_ad</TableName>
          </TableRow>
          {fields.map(([name, kind]) => (
            <FieldRow key={name}>
              <Check />
              <FieldIcon>{kind === "s" ? <Sigma /> : kind === "c" ? <CalcMini /> : null}</FieldIcon>
              <FieldName>{name}</FieldName>
            </FieldRow>
          ))}
          <DataThumb />
        </DataPane>
      </Main>

      <StatusBar>
        <PageCount>Page 1 of 2</PageCount>
        <Zoom>
          <ZoomSign>-</ZoomSign>
          <Slider><Thumb /><Tick /></Slider>
          <ZoomSign $big>+</ZoomSign>
          <ZoomPct>63%</ZoomPct>
          <Svg w={24} h={18} stroke="#605e5c" sw={1.500}>
            <rect x="1" y="1" width="22" height="16" />
            <path d="M5 7V4h4M19 7V4h-4M5 11v3h4M19 11v3h-4" />
          </Svg>
        </Zoom>
      </StatusBar>

      <Taskbar>
        <Start>
          <Svg w={24} h={24} stroke="none" sw={0}>
            <path d="M0 3.500l10-1.500v9.500H0zM11 1.800L24 0v11.500H11zM0 12.500h10V22L0 20.500zM11 12.500h13V24l-13-1.800z" fill="#fff" />
          </Svg>
        </Start>
        <TaskSearch>
          <Svg w={26} h={28} stroke="#252423" sw={1.500}><circle cx="17" cy="9" r="8" /><path d="M11 16L2 27" /></Svg>
          <span>Type here to search</span>
          <Sparkles>
            <svg width="92" height="40" viewBox="0 0 92 40">
              <defs>
                <linearGradient id="star" x1="0" y1="0" x2="0" y2="1">
                  <stop offset="0" stopColor="#fbd92e" /><stop offset="1" stopColor="#f5a51f" />
                </linearGradient>
              </defs>
              <path d="M34 1C36 12 42 16 52 18 42 20 36 26 34 36 32 26 26 20 16 18 26 16 32 12 34 1z" fill="url(#star)" />
              <path d="M69.500 17C70 22 73 24 79.500 25 73 26 70 28 69.500 33 69 28 66 26 59.500 25 66 24 69 22 69.500 17z" fill="url(#star)" />
              <path d="M5 27C5.500 30 7 32 11 33 7 34 5.500 36 5 39 4.500 36 3 34-1 33 3 32 4.500 30 5 27z" fill="#2aa0f0" />
              <circle cx="59" cy="4" r="3" fill="#e8532a" /><circle cx="87" cy="34" r="3" fill="#8fc84a" />
            </svg>
          </Sparkles>
        </TaskSearch>
        <TaskBtn $w={71}>
          <Svg w={26} h={24} stroke="#fff" sw={1.300}>
            <path d="M1 1h8v1M12 1h6M1 7h17v10H1zM1 23h8v-1M12 23h6M23 1v2M23 8v8M23 21v2" />
          </Svg>
        </TaskBtn>
        <TaskBtn $w={61} $gap={12} $open>
          <Svg w={34} h={30} stroke="none" sw={0}>
            <path d="M0 2h12l3 3h19v25H0z" fill="#f7d25c" /><path d="M0 2h12l3 3h-3l-3 3H0z" fill="#e0a526" />
            <path d="M10 19h14v11H10z" fill="#2b88d8" /><path d="M14 24h6v6h-6z" fill="#0f5c9c" />
          </Svg>
        </TaskBtn>
        <TaskBtn $w={60} $gap={14} $open>
          <Svg w={38} h={36} stroke="none" sw={0}>
            <ellipse cx="19" cy="18" rx="17" ry="18" fill="#e0111b" /><ellipse cx="19" cy="18" rx="7.500" ry="14" fill="#232639" />
          </Svg>
        </TaskBtn>
        <TaskBtn $w={60} $gap={15}>
          <svg width="38" height="38" viewBox="0 0 38 38">
            <path d="M19 1a18 18 0 0 1 16 9H19a9 9 0 0 0-9 5L5 6a18 18 0 0 1 14-5z" fill="#db4437" />
            <path d="M4 6l9 16a9 9 0 0 0 7 5l-5 10A18 18 0 0 1 4 6z" fill="#0f9d58" />
            <path d="M36 11a18 18 0 0 1-20 26l8-12a9 9 0 0 0 2-13z" fill="#f4b400" />
            <circle cx="19" cy="19" r="7" fill="#4285f4" stroke="#fff" strokeWidth="1.500" />
          </svg>
        </TaskBtn>
        <TaskBtn $w={61} $gap={15} $open>
          <Svg w={36} h={26} stroke="none" sw={0}>
            <rect x="0" y="0" width="36" height="26" rx="6" fill="#f00f2b" /><path d="M14 7l10 6-10 6z" fill="#fff" />
          </Svg>
        </TaskBtn>
        <TaskBtn $w={62} $gap={13} $open>
          <Svg w={38} h={36} stroke="#25d366" sw={3}>
            <path d="M6 34l2-9C3 15 10 2 20 2c9 0 16 7 16 16s-8 15-16 15c-3 0-6-1-8-2z" />
            <path d="M14 11c-2 4 4 12 11 12l2-3-5-3-2 2c-2-1-3-3-3-5l1-2-2-3z" fill="#25d366" stroke="none" />
          </Svg>
          <Badge>99+</Badge>
        </TaskBtn>
        <TaskBtn $w={72} $gap={8} $open $active>
          <Svg w={26} h={36} stroke="none" sw={0}>
            <rect x="0" y="22" width="8" height="14" fill="#e8a20c" /><rect x="9" y="11" width="8" height="25" fill="#f2c811" /><rect x="18" y="0" width="8" height="36" fill="#f7dc5a" />
          </Svg>
        </TaskBtn>
        <TaskBtn $w={61} $gap={9} $open>
          <svg width="34" height="34" viewBox="0 0 34 34">
            <path d="M0 5L20 1v32L0 29z" fill="#107c41" />
            <rect x="20" y="5" width="13" height="24" fill="#fff" /><path d="M22 8h9M22 13h9M22 18h9M22 23h9M26 6v22" stroke="#107c41" strokeWidth="2" />
            <text x="9.500" y="23" fontSize="15" fontWeight="700" fontFamily="Liberation Sans" fill="#fff" textAnchor="middle">X</text>
          </svg>
        </TaskBtn>
        <DesktopLabel>Desktop</DesktopLabel>
        <TopChevron>
          <Svg w={12} h={11} stroke="#fff" sw={1.3}><path d="M1 1l4 4.500-4 4.500M6 1l4 4.500-4 4.500" /></Svg>
        </TopChevron>
        <SunDot />
        <Weather>26°C</Weather>
        <Tray $ml={40}><Svg w={18} h={10} stroke="#fff" sw={1.3}><path d="M1 9l8-8 8 8" /></Svg></Tray>
        <Tray $ml={18}>
          <Svg w={18} h={24} stroke="#fff" sw={1.2}>
            <rect x="1" y="4" width="9" height="15" rx="1" /><path d="M10 9l7-3v11l-7-3M3 1h6M3 23h6" />
          </Svg>
        </Tray>
        <Tray $ml={12}>
          <Svg w={25} h={24} stroke="none" sw={0}>
            <path d="M3 15c-3-6 3-12 10-11 6 1 9 5 8 10z" fill="#c8c6c4" />
            <circle cx="18" cy="16" r="7.500" fill="#d13438" />
            <path d="M15 13l6 6M21 13l-6 6" stroke="#fff" strokeWidth="1.500" />
          </Svg>
        </Tray>
        <Tray $ml={12}>
          <Svg w={24} h={24} stroke="#fff" sw={1.200}>
            <rect x="6" y="7" width="17" height="13" fill="#fff" /><path d="M2 3v3M6 3v3M1 6h6v3H1zM4 9v5c0 2 1 3 3 3" />
          </Svg>
        </Tray>
        <Tray $ml={17}>
          <Svg w={18} h={20} stroke="#fff" sw={1.100}>
            <path d="M1 19C1 10 8 2 17 1M6 19C6 13 10 8 15 7M10 19c0-3 2-6 5-6" /><circle cx="16" cy="18" r="1.300" fill="#fff" />
          </Svg>
        </Tray>
        <Tray $ml={15}>
          <Svg w={20} h={22} stroke="#fff" sw={1.100}>
            <path d="M1 8h4l5-6v18l-5-6H1zM13 8c1 2 1 4 0 6M16 5c2 4 2 8 0 12M19 1c1 7 1 13 0 20" />
          </Svg>
        </Tray>
        <Clock>
          <span>10:35 AM</span>
          <span>6/16/2025</span>
        </Clock>
        <Tray $ml={22}>
          <Svg w={24} h={26} stroke="none" sw={0}>
            <path d="M0 0h24v19h-7l-5 6v-6H0z" fill="#fff" />
            <path d="M5 5h14M5 9h14M5 13h10" stroke="#555" strokeWidth="1" />
          </Svg>
        </Tray>
      </Taskbar>
    </Shell>
  )
}

const GlobalStyle = createGlobalStyle`
  html, body { margin: 0; padding: 0; background: #fff; }
  body { width: 1920px; height: 1080px; overflow: hidden; }
  * { box-sizing: border-box; }
`

const Shell = styled.div`
  width: 1920px;
  height: 1080px;
  display: flex;
  flex-direction: column;
  font-family: ${UI};
  color: #252423;
  overflow: hidden;
`

const TitleBar = styled.div`
  height: 51px;
  flex: none;
  display: flex;
  align-items: center;
  background: #3b3a38;
  color: #fff;
`
const TitleIcons = styled.div`
  display: flex;
  align-items: center;
  gap: 23px;
  margin-left: 25px;
`
const FileName = styled.div`
  margin-left: 11px;
  font-size: 17.4px;
  letter-spacing: -0.15px;
  white-space: nowrap;
`
const Caret = styled.div`
  margin-left: 9px;
  margin-top: -4px;
  width: 0;
  height: 0;
  border-left: 6.5px solid transparent;
  border-right: 6.5px solid transparent;
  border-top: 8px solid #fff;
`
const TitleSearch = styled.div`
  position: absolute;
  left: 775px;
  top: 8px;
  width: 599px;
  height: 36px;
  border-radius: 2px;
  background: #d2d1cf;
  display: flex;
  align-items: center;
  padding-left: 27px;
  gap: 15px;
  font-size: 19.5px;
  color: #22584d;
`
const UserName = styled.div`
  margin-left: auto;
  font-size: 17.5px;
  letter-spacing: -0.3px;
`
const Avatar = styled.div`
  margin-left: 15px;
  width: 30px;
  height: 30px;
  border-radius: 50%;
  background: #fff;
`
const WinControls = styled.div`
  display: flex;
  align-items: center;
  gap: 51px;
  margin-left: 48px;
  margin-right: 25px;
`

const Ribbon = styled.div`
  height: 189px;
  flex: none;
  background: #fbfbfb;
  position: relative;
  z-index: 3;
  box-shadow: 0 2px 5px rgba(0, 0, 0, 0.16);
`
const TabRow = styled.div`
  height: 54px;
  display: flex;
  align-items: center;
  gap: 45.5px;
  padding-left: 33px;
`
const RTab = styled.div`
  position: relative;
  height: 54px;
  line-height: 48px;
  font-size: 20.5px;
  letter-spacing: 0;
  font-weight: ${p => (p.$on ? 600 : 400)};
  margin-right: ${p => (p.$first ? "10px" : 0)};
  &::after {
    content: "";
    display: ${p => (p.$on ? "block" : "none")};
    position: absolute;
    left: 0;
    right: 0;
    top: 42px;
    height: 5px;
    background: ${GREEN};
  }
`
const ShareBtn = styled.div`
  margin-left: auto;
  margin-right: 8px;
  margin-top: -6px;
  width: 125px;
  height: 36px;
  border-radius: 5px;
  background: ${GREEN};
  color: #fff;
  display: flex;
  align-items: center;
  padding-left: 9px;
  font-size: 16.5px;
  gap: 10px;
  span { margin-left: 1px; }
`
const Groups = styled.div`
  height: 132px;
  display: flex;
`
const GroupBox = styled.div`
  width: ${p => p.$w}px;
  flex: none;
  height: 132px;
  border-right: 1px solid #dcdad8;
  display: flex;
  flex-direction: column;
`
const GroupBody = styled.div`
  flex: 1;
  display: flex;
  padding-top: 5px;
  padding-left: ${p => p.$pad}px;
`
const GroupLabel = styled.div`
  height: 14px;
  line-height: 14px;
  font-size: 14.5px;
  letter-spacing: -0.2px;
  text-align: center;
  color: #3b3a39;
`
const Group = ({ $w, $pad, label, children }) => (
  <GroupBox $w={$w}>
    <GroupBody $pad={$pad}>{children}</GroupBody>
    <GroupLabel>{label}</GroupLabel>
  </GroupBox>
)
const RBtn = styled.div`
  width: ${p => p.$w}px;
  flex: none;
  display: flex;
  flex-direction: column;
  align-items: center;
  color: ${p => (p.$off ? "#c8c6c4" : "#252423")};
`
const RIcon = styled.div`
  height: 51px;
  margin-left: ${p => p.$dx * 2}px;
  display: flex;
  align-items: center;
  justify-content: center;
`
const RLine = styled.div`
  min-height: 25px;
  line-height: 25px;
  font-size: 17px;
  letter-spacing: -0.2px;
  white-space: nowrap;
  display: flex;
  align-items: center;
`
const SmallStack = styled.div`
  margin-left: 13px;
  margin-top: -5px;
  display: flex;
  flex-direction: column;
`
const SmallBtn = styled.div`
  height: 36px;
  display: flex;
  align-items: center;
  gap: 8px;
  font-size: 17px;
  letter-spacing: -0.2px;
  color: #c8c6c4;
  white-space: nowrap;
  margin-left: ${p => (p.$pull ? "-1px" : 0)};
`
const Collapse = styled.div`
  margin-left: 57px;
  align-self: flex-end;
  height: 22px;
`

const Main = styled.div`
  flex: none;
  height: 744px;
  display: flex;
  background: #f3f2f1;
`
const Rail = styled.div`
  width: 61px;
  flex: none;
  border-right: 1px solid #e1dfdd;
  display: flex;
  flex-direction: column;
`
const RailItem = styled.div`
  height: 60px;
  flex: none;
  margin-bottom: ${p => (p.$on ? "-2px" : 0)};
  display: flex;
  align-items: center;
  justify-content: center;
  border-left: 4px solid ${p => (p.$on ? GREEN : "transparent")};
  padding-right: 4px;
`
const Center = styled.div`
  width: 1318px;
  flex: none;
  display: flex;
  flex-direction: column;
`
const CanvasRow = styled.div`
  height: 691px;
  display: flex;
  background: #fff;
`
const Canvas = styled.div`
  width: 1269px;
  flex: none;
  border-right: 1px solid #c8c6c4;
  padding-left: 28px;
`
const Page = styled.div`
  position: relative;
  width: 1213px;
  height: 681px;
  background:
    repeating-linear-gradient(to bottom, #555 0 3px, transparent 3px 5px) left top / 3px 100% no-repeat,
    repeating-linear-gradient(to bottom, #555 0 3px, transparent 3px 5px) right top / 3px 100% no-repeat,
    repeating-linear-gradient(to right, #555 0 3px, transparent 3px 5px) left bottom / 100% 3px no-repeat;
`
const Card = styled.div`
  position: absolute;
  left: ${p => p.$x - 89}px;
  top: ${p => p.$y - 240}px;
  width: ${p => p.$w}px;
  height: ${p => p.$h}px;
  border: 2px solid #d0d0d0;
  padding: 12px 0 0 10px;
  display: flex;
  flex-direction: column;
  justify-content: center;
`
const CardLabel = styled.div`
  font-family: Roboto, sans-serif;
  font-size: 14.5px;
  line-height: 20px;
  color: #605e5c;
  white-space: nowrap;
`
const CardValue = styled.div`
  font-family: Roboto, sans-serif;
  font-size: 50px;
  line-height: 72px;
  letter-spacing: -0.5px;
  margin-left: 1px;
  color: #252423;
  white-space: nowrap;
`
const SlicerTitle = styled.div`
  position: absolute;
  left: ${p => p.$x - 89}px;
  top: 350px;
  font-family: Roboto, sans-serif;
  font-size: 15px;
  font-weight: 500;
  line-height: 20px;
  color: #252423;
`
const Tile = styled.div`
  position: absolute;
  left: ${p => p.$x - 89}px;
  top: ${p => p.$y - 240}px;
  width: ${p => p.$w}px;
  height: ${p => p.$h}px;
  border: 2px solid #d8d8d8;
  display: flex;
  align-items: center;
  justify-content: ${p => (p.$left ? "flex-start" : "center")};
  padding-left: ${p => (p.$left ? "12px" : 0)};
  font-family: Roboto, sans-serif;
  font-size: 12.5px;
  letter-spacing: 1px;
  color: #252423;
`
const Insights = styled.div`
  position: absolute;
  left: ${969 - 89}px;
  top: ${595 - 240}px;
  width: 332px;
  font-family: "Liberation Serif", serif;
  font-size: 15px;
  line-height: 17px;
  color: #1a1a1a;
`
const InsightsTitle = styled.div`
  font-weight: 700;
  font-size: 15px;
  height: 18px;
`
const Bullet = styled.div`
  position: relative;
  padding-left: 17px;
  white-space: nowrap;
  span { display: block; }
  &::before {
    content: "";
    position: absolute;
    left: 10px;
    top: 8px;
    width: 2px;
    height: 2px;
    background: #1a1a1a;
  }
`
const Filters = styled.div`
  width: 49px;
  flex: none;
  display: flex;
  flex-direction: column;
  align-items: center;
  padding-top: 21px;
`
const FilterGlyph = styled.div`
  margin-top: 22px;
  height: 20px;
`
const FiltersText = styled.div`
  margin-top: 12px;
  margin-right: 2px;
  writing-mode: vertical-rl;
  font-size: 22px;
  font-weight: 600;
  line-height: 24px;
  color: #252423;
`
const TabBar = styled.div`
  height: 53px;
  display: flex;
  background: #f3f2f1;
`
const ViewIcons = styled.div`
  width: 192px;
  flex: none;
  display: flex;
  align-items: center;
  padding-left: 15px;
`
const ViewBtn = styled.div`
  position: relative;
  width: 36px;
  flex: none;
  display: flex;
  justify-content: center;
  margin-top: -6px;
  & + & { margin-left: 31px; }
  &::after {
    content: "";
    display: ${p => (p.$on ? "block" : "none")};
    position: absolute;
    left: 0;
    right: 0;
    bottom: -12px;
    height: 4px;
    border-radius: 2px;
    background: ${GREEN};
  }
`
const ArrowBtn = styled.div`
  width: 16px;
  flex: none;
  margin-top: -4px;
  margin-left: ${p => p.$gap}px;
  display: flex;
  justify-content: center;
`
const PageTab = styled.div`
  position: relative;
  width: 333px;
  flex: none;
  display: flex;
  align-items: center;
  justify-content: center;
  background: #fff;
  border-left: 1px solid #a19f9d;
  border-bottom: ${p => (p.$on ? `6px solid ${GREEN}` : "0")};
  padding-top: ${p => (p.$on ? "6px" : "0")};
  font-size: ${p => (p.$on ? "17.2px" : "17.7px")};
  letter-spacing: -0.2px;
  font-weight: ${p => (p.$on ? 600 : 400)};
  color: #252423;
`
const TabClose = styled.span`
  position: absolute;
  top: 4px;
  right: 7px;
  font-size: 15px;
  font-weight: 700;
`
const AddPage = styled.div`
  width: 59px;
  flex: none;
  background: ${GREEN};
  color: #fff;
  display: flex;
  align-items: center;
  justify-content: center;
  font-size: 30px;
  font-weight: 700;
`

const VizPane = styled.div`
  width: 272px;
  flex: none;
  border-left: 1px solid #e1dfdd;
  border-right: 1px solid #e1dfdd;
  display: flex;
  flex-direction: column;
`
const PaneHeader = styled.div`
  height: 58px;
  padding: 1px 13px 0 11px;
  flex: none;
  display: flex;
  align-items: center;
  justify-content: space-between;
`
const PaneTitle = styled.div`
  font-size: 22.8px;
  font-weight: 600;
  letter-spacing: -0.3px;
`
const BuildLabel = styled.div`
  height: 20px;
  line-height: 20px;
  padding-left: 11px;
  font-size: 17px;
  font-weight: 600;
  letter-spacing: -0.2px;
  color: #252423;
`
const BuildTabs = styled.div`
  position: relative;
  margin-top: 8px;
  padding-left: 12px;
  height: 67px;
  border-bottom: 1px solid #8a8886;
  display: flex;
  flex: none;
`
const BuildBtn = styled.div`
  width: 48px;
  height: 48px;
  border-radius: 3px;
  background: #d2d0ce;
  display: flex;
  align-items: center;
  justify-content: center;
`
const FormatBtn = styled.div`
  margin-left: 57px;
  height: 48px;
  display: flex;
  align-items: center;
`
const Notch = styled.div`
  position: absolute;
  left: 23px;
  top: 55px;
  height: 13px;
`
const VizGrid = styled.div`
  padding: 11px 0 0 9px;
  display: grid;
  grid-template-columns: repeat(6, 42px);
  grid-auto-rows: 41.8px;
`
const VizCell = styled.div`
  display: flex;
  align-items: center;
  justify-content: ${p => (p.$more ? "flex-start" : "center")};
  padding-left: ${p => (p.$more ? "9px" : 0)};
`
const Wells = styled.div`
  position: relative;
  margin-top: 7px;
  flex: 1;
  border-top: 1px solid #e1dfdd;
  overflow: hidden;
`
const WellLabel = styled.div`
  margin: 15px 0 0 17px;
  line-height: 20px;
  font-size: 17.3px;
  letter-spacing: -0.2px;
  color: #3b3a39;
`
const WellBox = styled.div`
  margin: 10px 0 0 7px;
  width: 254px;
  height: 42px;
  padding-left: 13px;
  line-height: 38px;
  background: #fff;
  border: 1px dashed #d2d0ce;
  font-size: 17.3px;
  letter-spacing: -0.2px;
  color: #3b3a39;
`
const DrillTitle = styled.div`
  margin: 18px 0 0 17px;
  line-height: 20px;
  font-size: 17.3px;
  font-weight: 600;
  letter-spacing: -0.2px;
  color: #3b3a39;
`
const ToggleRow = styled.div`
  margin: ${p => (p.$gap ? "16px" : "15px")} 0 0 17px;
  width: 219px;
  height: 24px;
  display: flex;
  align-items: center;
  justify-content: space-between;
  font-size: 17.3px;
  letter-spacing: -0.2px;
  color: #3b3a39;
`
const ToggleWrap = styled.div`
  width: 47px;
  height: 24px;
  border: 1px solid #605e5c;
  border-radius: 12px;
  background: #f8f7f6;
  display: flex;
  align-items: center;
  padding-left: 6px;
  gap: 3px;
  font-size: 13px;
  color: #8a8886;
`
const Knob = styled.div`
  width: 12px;
  height: 12px;
  border-radius: 50%;
  background: #605e5c;
`
const WellStub = styled.div`
  margin: 16px 0 0 7px;
  width: 254px;
  height: 6px;
  background: #fff;
  border: 1px dashed #d2d0ce;
  border-bottom: 0;
`
const WellThumb = styled.div`
  position: absolute;
  right: 0;
  top: 3px;
  width: 9px;
  height: 190px;
  border-radius: 4px;
  background: #8a8886;
`

const DataPane = styled.div`
  position: relative;
  flex: 1;
  display: flex;
  flex-direction: column;
  overflow: hidden;
`
const DataSearch = styled.div`
  margin: 10px 0 0 6px;
  width: 257px;
  height: 36px;
  flex: none;
  border: 1px solid #e1dfdd;
  border-bottom: 1.5px solid #8a8886;
  border-radius: 5px;
  background: #fff;
  display: flex;
  align-items: center;
  padding-left: 18px;
  gap: 8px;
  font-size: 19px;
  color: #605e5c;
`
const TableRow = styled.div`
  margin-top: 14px;
  height: 36px;
  flex: none;
  display: flex;
  align-items: center;
  padding-left: 19px;
  gap: 7px;
`
const TableName = styled.div`
  font-size: 17.5px;
  letter-spacing: -0.2px;
  color: #3b3a39;
`
const FieldRow = styled.div`
  height: 36px;
  flex: none;
  display: flex;
  align-items: center;
  padding-left: 65px;
`
const Check = styled.div`
  width: 18px;
  height: 18px;
  flex: none;
  border: 1px solid #8a8886;
  border-radius: 3px;
  background: #fbfbfb;
`
const FieldIcon = styled.div`
  width: 20px;
  margin-left: 13px;
  flex: none;
  display: flex;
  align-items: center;
`
const FieldName = styled.div`
  margin-left: 6px;
  font-size: 17.5px;
  letter-spacing: -0.2px;
  color: #3b3a39;
  white-space: nowrap;
`
const DataThumb = styled.div`
  position: absolute;
  left: 251px;
  top: 116px;
  width: 12px;
  height: 438px;
  background: #8a8886;
`

const StatusBar = styled.div`
  height: 36px;
  flex: none;
  display: flex;
  align-items: center;
  justify-content: space-between;
  padding: 0 26px 0 6px;
  background: #f3f2f1;
  border-top: 1px solid #e1dfdd;
  border-bottom: 1px solid #000;
`
const PageCount = styled.div`
  font-size: 17.5px;
  letter-spacing: -0.2px;
  color: #605e5c;
`
const Zoom = styled.div`
  display: flex;
  align-items: center;
`
const ZoomSign = styled.div`
  width: ${p => (p.$big ? "16px" : "8px")};
  font-size: ${p => (p.$big ? "20px" : "18px")};
  line-height: 20px;
  color: #605e5c;
  text-align: center;
  margin-left: ${p => (p.$big ? "4px" : 0)};
`
const Slider = styled.div`
  position: relative;
  margin-left: 6px;
  width: 151px;
  height: 1px;
  background: #605e5c;
`
const Thumb = styled.div`
  position: absolute;
  left: 40px;
  top: -9px;
  width: 6px;
  height: 19px;
  background: #605e5c;
`
const Tick = styled.div`
  position: absolute;
  left: 75px;
  top: -3px;
  width: 1px;
  height: 7px;
  background: #605e5c;
`
const ZoomPct = styled.div`
  margin: 0 28px 0 20px;
  font-size: 17px;
  letter-spacing: -0.2px;
  color: #605e5c;
`

const Taskbar = styled.div`
  height: 60px;
  flex: none;
  display: flex;
  align-items: center;
  background: linear-gradient(90deg, #1f2337, #20242f 60%, #1e2231);
  color: #fff;
`
const Start = styled.div`
  width: 72px;
  height: 60px;
  flex: none;
  display: flex;
  align-items: center;
  justify-content: center;
`
const TaskSearch = styled.div`
  position: relative;
  width: 432px;
  height: 60px;
  flex: none;
  background: #f3f3f3;
  border: 2px solid #c5c5c5;
  border-top-width: 1px;
  display: flex;
  align-items: center;
  padding-left: 16px;
  gap: 16px;
  font-size: 22.2px;
  letter-spacing: -0.3px;
  color: #252423;
`
const Sparkles = styled.div`
  position: absolute;
  left: 324px;
  top: 9px;
  height: 40px;
`
const TaskBtn = styled.div`
  position: relative;
  width: ${p => p.$w}px;
  height: 60px;
  flex: none;
  margin-left: ${p => p.$gap || 0}px;
  display: flex;
  align-items: center;
  justify-content: center;
  background: ${p => (p.$active ? "#4a4d5e" : "transparent")};
  &::after {
    content: "";
    display: ${p => (p.$open ? "block" : "none")};
    position: absolute;
    left: 0;
    right: 0;
    bottom: 0;
    height: 3px;
    background: #76b9ed;
  }
`
const Badge = styled.div`
  position: absolute;
  left: 24px;
  top: 29px;
  width: 45px;
  height: 25px;
  border-radius: 13px;
  background: #2c2f3d;
  border: 1px solid #8a8a90;
  display: flex;
  align-items: center;
  justify-content: center;
  font-size: 17px;
  font-weight: 600;
`
const DesktopLabel = styled.div`
  margin-left: 169px;
  width: 67px;
  font-size: 17.3px;
  letter-spacing: -0.2px;
  color: #dcdcdc;
`
const TopChevron = styled.div`
  margin-left: 11px;
  align-self: flex-start;
  margin-top: 4px;
  width: 12px;
`
const SunDot = styled.div`
  margin-left: 45px;
  width: 30px;
  height: 30px;
  border-radius: 50%;
  background: linear-gradient(180deg, #ffc400, #e36c00);
`
const Weather = styled.div`
  margin-left: 15px;
  width: 43px;
  font-size: 19.5px;
  letter-spacing: -0.4px;
  white-space: nowrap;
`
const Tray = styled.div`
  margin-left: ${p => p.$ml}px;
  display: flex;
  align-items: center;
`
const Clock = styled.div`
  margin-left: 10px;
  width: 100px;
  display: flex;
  flex-direction: column;
  align-items: center;
  gap: 6px;
  font-size: 18px;
  line-height: 22px;
  letter-spacing: -0.3px;
  color: #fff;
`
